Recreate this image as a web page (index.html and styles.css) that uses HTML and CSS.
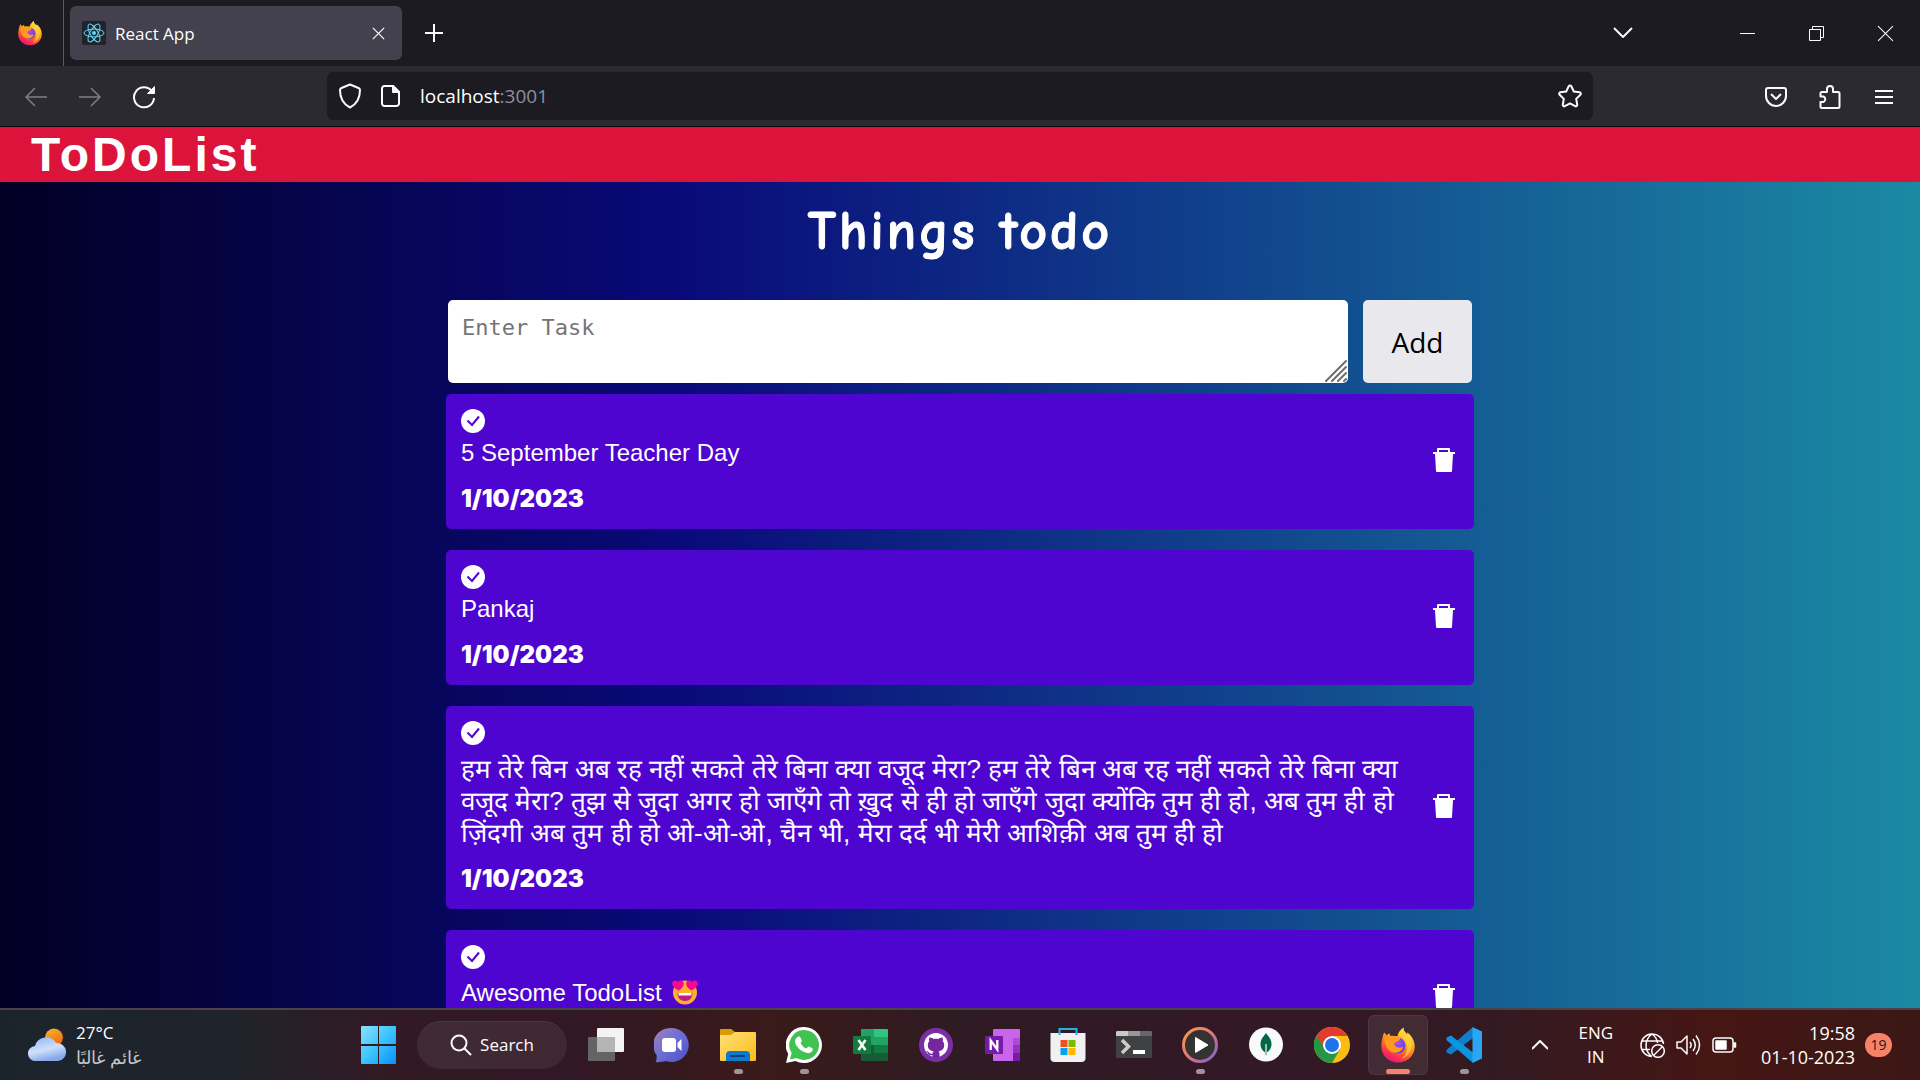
FILE: index.html
```html
<!DOCTYPE html>
<html lang="en">
<head>
<meta charset="utf-8">
<meta name="viewport" content="width=device-width, initial-scale=1">
<title>React App</title>
<link rel="stylesheet" href="styles.css">
</head>
<body>
<svg class="defs" aria-hidden="true">
  <defs>
    <linearGradient id="ffBody" x1=".75" y1="0" x2=".25" y2="1">
      <stop offset="0" stop-color="#fff44f"/><stop offset=".35" stop-color="#ffb01e"/><stop offset=".6" stop-color="#ff6a2b"/><stop offset=".85" stop-color="#f9225c"/><stop offset="1" stop-color="#e21587"/>
    </linearGradient>
    <radialGradient id="ffGlobe" cx=".5" cy=".35" r=".7">
      <stop offset="0" stop-color="#b04bf5"/><stop offset="1" stop-color="#4a43c9"/>
    </radialGradient>
    <symbol id="firefox" viewBox="0 0 34 36">
      <path fill="url(#ffBody)" d="M3 5.500c1.500 1 2.200 2.200 2.500 3.300C6.300 7.500 7.500 6.700 8.700 6.300c-.2 1.500.2 2.600 1.200 3.200 1.600-.6 4-.8 6.400-.2C17 6 19 3 22.500.5c-.3 3 1.500 4.800 3.700 6.800.2-.5.200-1.300 0-2 4.800 4 7.500 8.600 7.500 14.200C33.700 28.500 26.500 35.500 17 35.500S.3 28.300.3 19.500C.3 14 1.700 9.500 3 5.500z"/>
      <circle cx="16.500" cy="18.500" r="8" fill="url(#ffGlobe)"/>
      <path fill="#ff9a1c" d="M3.500 11c4-3 9-2.500 13.500-1.500 2 .5 2.500 2 1.500 3.500-1.300 1.500-3.800 1.600-4.800 3-.8 1.500.4 3.800 3 4.500 2 .5 4-.3 5.800-.5-1.500 4-5 6-8.500 5.800C8 25.500 3 19 3.500 11z"/>
      <path fill="#ffd23a" opacity=".75" d="M22.500.5c-.3 3 1.500 4.800 3.700 6.800 4 4 5.300 8.700 4 14.200-1.500 6-5.700 9-9.700 10.500 5.500-5 7-11 4.500-16.500C23.300 12 18.500 9 22.500.5z"/>
    </symbol>
    <symbol id="check" viewBox="0 0 24 24">
      <circle cx="12" cy="12" r="12" fill="#fff"/>
      <path d="M6.500 11.500l4.500 4.500 7-8.500" fill="none" stroke="#4d05cf" stroke-width="2"/>
    </symbol>
    <symbol id="trash" viewBox="0 0 24 24">
      <path fill="#fff" fill-rule="evenodd" d="M6 0h11a1 1 0 0 1 1 1v3h5v2h-2l-1 17a1 1 0 0 1-1 1H5a1 1 0 0 1-1-1L3 6H1V4h4V1a1 1 0 0 1 1-1zm1 2v2h9V2z"/>
    </symbol>
    <symbol id="close" viewBox="0 0 16 16"><path d="M1 1l14 14M15 1L1 15"/></symbol>
  </defs>
</svg>

<header class="browser">
  <div class="tabstrip">
    <button class="firefox-view" aria-label="Firefox View"><svg width="24" height="28"><use href="#firefox"/></svg></button>
    <div class="tab">
      <svg width="24" height="24" viewBox="0 0 24 24"><rect width="24" height="24" rx="2" fill="#20232a"/><g fill="none" stroke="#61dafb" stroke-width="1"><ellipse cx="12" cy="12" rx="10" ry="3.900"/><ellipse cx="12" cy="12" rx="10" ry="3.900" transform="rotate(60 12 12)"/><ellipse cx="12" cy="12" rx="10" ry="3.900" transform="rotate(120 12 12)"/></g><circle cx="12" cy="12" r="2" fill="#61dafb"/></svg>
      <span class="tab-title">React App</span>
      <button class="icon-btn tab-close" aria-label="Close tab"><svg class="line" width="13" height="13"><use href="#close"/></svg></button>
    </div>
    <button class="icon-btn new-tab" aria-label="New tab"><svg class="line bold" width="20" height="20" viewBox="0 0 20 20"><path d="M10 1v18M1 10h18"/></svg></button>
    <div class="window-controls">
      <button class="icon-btn list-tabs" aria-label="List all tabs"><svg class="line bold" width="20" height="12" viewBox="0 0 20 12"><path d="M1 1l9 9 9-9"/></svg></button>
      <button class="icon-btn" aria-label="Minimize"><svg class="line thin" width="15" height="15" viewBox="0 0 15 15"><path d="M0 7.500h15"/></svg></button>
      <button class="icon-btn" aria-label="Restore"><svg class="line thin" width="15" height="15" viewBox="0 0 15 15"><path d="M.5 3.500h11v11H.5zM3.500 3.500v-3h11v11h-3"/></svg></button>
      <button class="icon-btn" aria-label="Close"><svg class="line thin" width="17" height="17"><use href="#close"/></svg></button>
    </div>
  </div>
  <div class="toolbar">
    <nav class="nav-buttons" aria-label="History">
      <button class="icon-btn dim" aria-label="Back"><svg class="line" width="22" height="20" viewBox="0 0 22 20"><path d="M10 1l-9 9 9 9M1 10h21"/></svg></button>
      <button class="icon-btn dim" aria-label="Forward"><svg class="line" width="22" height="20" viewBox="0 0 22 20"><path d="M12 1l9 9-9 9M21 10H0"/></svg></button>
      <button class="icon-btn" aria-label="Reload"><svg class="line bold" width="24" height="24" viewBox="0 0 24 24"><path d="M20.500 7A10 10 0 1 0 22 13"/><path d="M22.500 1.500v7h-7z" fill="#fbfbfe" stroke-width="1"/></svg></button>
    </nav>
    <div class="urlbar">
      <svg class="line bold" width="24" height="26" viewBox="0 0 24 26"><path d="M12 1.500l8.500 3.500c1 .5 1.500 1 1.500 2C22 15 19 21 12 24.500 5 21 2 15 2 7c0-1 .5-1.500 1.500-2z"/></svg>
      <svg class="line bold" width="20" height="22" viewBox="0 0 20 22"><path d="M3.500 1H12l6 6v11.500a2.500 2.500 0 0 1-2.500 2.500h-12A2.500 2.500 0 0 1 1 18.500v-15A2.500 2.500 0 0 1 3.500 1z"/><path d="M12 1v6h6z" fill="#fbfbfe"/></svg>
      <span class="url">localhost<span class="port">:3001</span></span>
      <button class="icon-btn" aria-label="Bookmark"><svg class="line bold" width="24" height="24" viewBox="0 0 24 24"><path d="M10.700 2.200a1.500 1.500 0 0 1 2.600 0l2.500 5.300 5.800.8a1.400 1.400 0 0 1 .8 2.400L18.200 14.900l1 5.800a1.400 1.400 0 0 1-2 1.500L12 19.400l-5.200 2.800a1.400 1.400 0 0 1-2-1.500l1-5.800L1.600 10.700a1.400 1.400 0 0 1 .8-2.400l5.800-.8z"/></svg></button>
    </div>
    <div class="tools">
      <button class="icon-btn" aria-label="Pocket"><svg class="line bold" width="22" height="20" viewBox="0 0 22 20"><path d="M3 1h16a2 2 0 0 1 2 2v6a10 10 0 0 1-20 0V3a2 2 0 0 1 2-2z"/><path d="M6 7l5 5 5-5"/></svg></button>
      <button class="icon-btn" aria-label="Extensions"><svg class="line bold" width="22" height="24" viewBox="0 0 22 24"><path d="M8 7V4a3 3 0 0 1 6 0v3h5a1.500 1.500 0 0 1 1.500 1.500V21.500A1.500 1.500 0 0 1 19 23H3a1.500 1.500 0 0 1-1.500-1.500V17h3a3 3 0 0 0 0-5.500h-3v-3A1.500 1.500 0 0 1 3 7z"/></svg></button>
      <button class="icon-btn" aria-label="Menu"><svg class="line bold" width="18" height="16" viewBox="0 0 18 16"><path d="M0 2h18M0 8h18M0 14h18"/></svg></button>
    </div>
  </div>
</header>

<main class="app">
  <div class="app-bar">ToDoList</div>
  <section class="board">
    <h1>Things todo</h1>
    <form class="new-task" onsubmit="return false">
      <div class="field">
        <textarea placeholder="Enter Task" aria-label="Enter Task"></textarea>
        <svg class="grip" width="22" height="22" viewBox="0 0 22 22" aria-hidden="true"><path d="M1 21L21 1M7 21L21 7M13 21l8-8M19 21l2-2"/></svg>
      </div>
      <button type="submit">Add</button>
    </form>
    <ul class="tasks">
      <li class="task">
        <div class="task-body"><svg class="tick" width="24" height="24"><use href="#check"/></svg><p>5 September Teacher Day</p><time datetime="2023-10-01">1/10/2023</time></div>
        <button class="delete" aria-label="Delete"><svg width="24" height="24"><use href="#trash"/></svg></button>
      </li>
      <li class="task">
        <div class="task-body"><svg class="tick" width="24" height="24"><use href="#check"/></svg><p>Pankaj</p><time datetime="2023-10-01">1/10/2023</time></div>
        <button class="delete" aria-label="Delete"><svg width="24" height="24"><use href="#trash"/></svg></button>
      </li>
      <li class="task">
        <div class="task-body"><svg class="tick" width="24" height="24"><use href="#check"/></svg><p class="tall" lang="hi">हम तेरे बिन अब रह नहीं सकते तेरे बिना क्या वजूद मेरा? हम तेरे बिन अब रह नहीं सकते तेरे बिना क्या वजूद मेरा? तुझ से जुदा अगर हो जाएँगे तो ख़ुद से ही हो जाएँगे जुदा क्योंकि तुम ही हो, अब तुम ही हो ज़िंदगी अब तुम ही हो ओ-ओ-ओ, चैन भी, मेरा दर्द भी मेरी आशिक़ी अब तुम ही हो</p><time datetime="2023-10-01">1/10/2023</time></div>
        <button class="delete" aria-label="Delete"><svg width="24" height="24"><use href="#trash"/></svg></button>
      </li>
      <li class="task">
        <div class="task-body"><svg class="tick" width="24" height="24"><use href="#check"/></svg><p class="tall">Awesome TodoList <svg class="emoji" role="img" aria-label="Smiling face with heart-eyes" width="26" height="26" viewBox="0 0 26 26"><circle cx="13" cy="13.500" r="12" fill="#ffb02e"/><path d="M5.500 14h15c0 5-3 8-7.500 8s-7.500-3-7.500-8z" fill="#bb1d80"/><path d="M6.500 14h13v2.500h-13z" fill="#fff"/><path d="M6.500 11.500C2 9.500 0 7 .3 4.300.6 1.500 4 .5 6 3c2-2.500 5.500-1.700 5.800 1 .3 2.800-1.600 5.500-5.300 7.500zM19.500 11.500c4.500-2 6.500-4.500 6.200-7.200C25.400 1.500 22 .5 20 3c-2-2.500-5.500-1.700-5.800 1-.3 2.800 1.600 5.500 5.300 7.500z" fill="#f70a8d"/></svg></p></div>
        <button class="delete" aria-label="Delete"><svg width="24" height="24"><use href="#trash"/></svg></button>
      </li>
    </ul>
  </section>
</main>

<footer class="taskbar">
  <div class="weather">
    <svg width="38" height="34" viewBox="0 0 38 34"><defs><linearGradient id="sun" x1="0" y1="0" x2=".5" y2="1"><stop offset="0" stop-color="#f6b92c"/><stop offset="1" stop-color="#ef6c14"/></linearGradient><linearGradient id="cloud" x1="0" y1="0" x2=".4" y2="1"><stop offset="0" stop-color="#8fb2f3"/><stop offset=".6" stop-color="#cfe0fb"/><stop offset="1" stop-color="#86a9ea"/></linearGradient></defs><circle cx="26" cy="9.500" r="9" fill="url(#sun)"/><path d="M8 33a7.500 7.500 0 0 1-1-15A11.500 11.500 0 0 1 28 15a9 9 0 0 1 2 18z" fill="url(#cloud)"/></svg>
    <div><div>27°C</div><div class="muted" lang="ar">غائم غالبًا</div></div>
  </div>
  <div class="apps">
    <button class="app-btn" aria-label="Start"><svg width="35" height="38" viewBox="0 0 35 38"><defs><linearGradient id="win" x1="0" y1="0" x2="1" y2="1"><stop offset="0" stop-color="#8be0ff"/><stop offset=".5" stop-color="#3cc4fc"/><stop offset="1" stop-color="#0a8ffb"/></linearGradient></defs><path fill="url(#win)" d="M1 0h16v18H0V1a1 1 0 0 1 1-1zM18 0h16a1 1 0 0 1 1 1v17H18zM0 20h17v18H1a1 1 0 0 1-1-1zM18 20h17v17a1 1 0 0 1-1 1H18z"/></svg></button>
    <button class="search"><svg class="line bold" width="22" height="22" viewBox="0 0 22 22"><circle cx="9" cy="9" r="7.500"/><path d="M14.500 14.500L21 21"/></svg>Search</button>
    <button class="app-btn" aria-label="Task view"><svg width="36" height="36" viewBox="0 0 36 36"><rect y="10" width="27" height="24" rx="1" fill="#646464"/><rect x="9" y="1" width="27" height="24" rx="1" fill="#f3f3f3"/><path d="M9 10h18v15H9z" fill="#b4b4b4"/></svg></button>
    <button class="app-btn" aria-label="Chat"><svg width="36" height="36" viewBox="0 0 36 36"><defs><linearGradient id="chat" x1="0" y1="0" x2="1" y2="1"><stop offset="0" stop-color="#a77fb8"/><stop offset=".5" stop-color="#6a6fd6"/><stop offset="1" stop-color="#4f4dc4"/></linearGradient></defs><path fill="url(#chat)" d="M18 1a17 17 0 1 1-6 33c-3 1-7 1.500-10.500 1 1-2 1.500-4 1-7A17 17 0 0 1 18 1z"/><rect x="8" y="11" width="14" height="14" rx="3" fill="#fff"/><path fill="#fff" d="M23.500 16l4-4v12l-4-4z"/></svg></button>
    <button class="app-btn open" aria-label="File Explorer"><svg width="36" height="36" viewBox="0 0 36 36"><defs><linearGradient id="folder" x1="0" y1="0" x2="1" y2="1"><stop offset="0" stop-color="#ffe07a"/><stop offset="1" stop-color="#fbbd18"/></linearGradient></defs><path fill="#dc9a07" d="M0 3a1 1 0 0 1 1-1h10l4 3h20v10H0z"/><path fill="url(#folder)" d="M0 8h11l4-3h20a1 1 0 0 1 1 1v27a1 1 0 0 1-1 1H1a1 1 0 0 1-1-1z"/><path fill="#0d78cc" d="M6 34v-6a4 4 0 0 1 4-4h16a4 4 0 0 1 4 4v6z"/><path d="M10 29h15" stroke="#07407e" stroke-width="2"/></svg></button>
    <button class="app-btn open" aria-label="WhatsApp"><svg width="36" height="36" viewBox="0 0 36 36"><path fill="#fff" d="M18 0a18 18 0 1 1-8.500 33.900L0 36l2.200-9A18 18 0 0 1 18 0z"/><path fill="#40c351" d="M18 3a15 15 0 1 1-7.500 28L4 32.500 5.600 26A15 15 0 0 1 18 3z"/><path fill="#fff" d="M12.500 9.500c.8-.3 1.500 0 1.800.7l1.500 3.300c.3.700-.8 2-1.300 2.500 1.300 2.700 3.300 4.500 6 5.600.6-.5 1.700-2.200 2.400-2l3.500 1.700c.7.400.3 2.200-.2 3-1 1.400-3.300 2.200-5.300 1.700-5.500-1.300-9.800-5.200-11.600-9.700-.9-2.500.5-5.900 3.200-6.800z"/></svg></button>
    <button class="app-btn" aria-label="Excel"><svg width="36" height="36" viewBox="0 0 36 36"><path fill="#21a366" d="M9 2h13v16H9z"/><path fill="#33c481" d="M22 2h13a1 1 0 0 1 1 1v8H22z"/><path fill="#21a366" d="M22 10h14v8H22z"/><path fill="#107c41" d="M22 18h14v8H22z"/><path fill="#185c37" d="M9 18h13v8h14v7a1 1 0 0 1-1 1H10a1 1 0 0 1-1-1z"/><rect x="1" y="9" width="18" height="18" rx="1" fill="#107c41"/><path d="M6.500 13l7 10M13.500 13l-7 10" stroke="#fff" stroke-width="2.500"/></svg></button>
    <button class="app-btn" aria-label="GitHub Desktop"><svg width="36" height="36" viewBox="0 0 36 36"><circle cx="18" cy="18" r="17" fill="#7b2ea8"/><circle cx="18" cy="18" r="12" fill="#fff"/><path fill="#7427a0" d="M11.500 10.500c1.500-.2 3 .6 4.300 1.500 1.400-.3 3-.3 4.400 0 1.300-.9 2.800-1.700 4.300-1.500.6 1.500.6 2.600.2 3.700 1 1.100 1.500 2.400 1.500 4 0 4-2.500 5.500-5.700 6 .6.600 1 1.300 1 2.500v4h-7V28c-3.500.7-4.200-1.200-5-2.500-.3-.5-1-1-1.600-1.400 2-.6 2.900 1 3.700 1.900.8.800 1.900.8 2.900.4.100-1 .5-1.700 1-2.200-3.200-.5-5.700-2-5.700-6 0-1.600.5-2.900 1.500-4-.4-1.100-.4-2.200.2-3.700z"/></svg></button>
    <button class="app-btn" aria-label="OneNote"><svg width="36" height="36" viewBox="0 0 36 36"><rect x="9" y="2" width="27" height="32" rx="1" fill="#ca64ea"/><path fill="#ae4bd5" d="M29 11h7v7h-7z"/><path fill="#9332bf" d="M29 18h7v8h-7z"/><path fill="#7719aa" d="M29 26h7v7a1 1 0 0 1-1 1h-6z"/><rect x="1" y="9" width="18" height="18" rx="1" fill="#7719aa"/><path d="M6.700 23V13.500l6.600 9V13" fill="none" stroke="#fff" stroke-width="2.300"/></svg></button>
    <button class="app-btn" aria-label="Microsoft Store"><svg width="36" height="36" viewBox="0 0 36 36"><path fill="#f1f1f1" d="M.5 6h35v25a4 4 0 0 1-4 4h-27a4 4 0 0 1-4-4z"/><path d="M9.500 8V2h17v6" fill="none" stroke="#22b2e6" stroke-width="2"/><path fill="#f25022" d="M10.500 13h7v7h-7z"/><path fill="#7fba00" d="M18.500 13h7v7h-7z"/><path fill="#00a4ef" d="M10.500 21h7v7h-7z"/><path fill="#ffb900" d="M18.500 21h7v7h-7z"/></svg></button>
    <button class="app-btn" aria-label="Terminal"><svg width="36" height="36" viewBox="0 0 36 36"><rect y="4" width="36" height="27" rx="1" fill="#404143"/><path fill="#c9c9c9" d="M1 4h11v5H0V5z"/><path fill="#989898" d="M12 4h12v5H12z"/><path fill="#66676a" d="M24 4h11l1 1v4H24z"/><path d="M6 13l6.500 6.500L6 26" fill="none" stroke="#ccc" stroke-width="3.500"/><path fill="#fff" d="M17 23h12v4H17z"/></svg></button>
    <button class="app-btn open" aria-label="Media Player"><svg width="36" height="36" viewBox="0 0 36 36"><defs><linearGradient id="media" x1="0" y1="0" x2="1" y2="1"><stop offset="0" stop-color="#ff9a3c"/><stop offset=".5" stop-color="#e0777f"/><stop offset="1" stop-color="#7a5bd0"/></linearGradient></defs><circle cx="18" cy="18" r="16.500" fill="#333" stroke="url(#media)" stroke-width="3"/><path d="M13.500 10.500L26 18l-12.500 7.500z" fill="#fff" stroke="#fff" stroke-linejoin="round"/></svg></button>
    <button class="app-btn" aria-label="MongoDB Compass"><svg width="36" height="36" viewBox="0 0 36 36"><circle cx="18" cy="17.500" r="17" fill="#f9fbfa"/><path fill="#00684a" d="M18 6c2 3 5.500 6 5.500 11 0 4.500-2.500 7-5 8.800L18 29l-.5-3.200c-2.500-1.800-5-4.300-5-8.800C12.500 12 16 9 18 6z"/><path d="M18 17v11" stroke="#9cbfb2" stroke-width="2"/></svg></button>
    <button class="app-btn" aria-label="Chrome"><svg width="36" height="36" viewBox="0 0 36 36"><circle cx="18" cy="18" r="18" fill="#fbbc14"/><path fill="#e33b2e" d="M2.400 9A18 18 0 0 1 33.600 9H18L8 20z"/><path fill="#259744" d="M2.400 9A18 18 0 0 0 18 36l8-13.500-14 0z"/><circle cx="18" cy="18" r="9" fill="#fff"/><circle cx="18" cy="18" r="7" fill="#1f73e8"/></svg></button>
    <button class="app-btn active" aria-label="Firefox"><svg width="34" height="36"><use href="#firefox"/></svg></button>
    <button class="app-btn open" aria-label="Visual Studio Code"><svg width="36" height="36" viewBox="0 0 36 36"><path fill="#0f7fcb" d="M27 0v11L5 27.500 1.500 26c-1.500-1-1.500-2.500-.5-3.500z"/><path fill="#0a95e0" d="M27 36V25.500L5 8.500 1.500 10C0 11-.2 12.500 1 13.500z"/><path fill="#2aa7f4" d="M26.500 0L36 4.500v27L26.500 36z"/></svg></button>
  </div>
  <div class="tray">
    <button class="icon-btn" aria-label="Show hidden icons"><svg class="line bold" width="16" height="10" viewBox="0 0 16 10"><path d="M0 9l8-8 8 8"/></svg></button>
    <div class="lang">ENG<br>IN</div>
    <div class="status">
      <svg class="line" width="25" height="25" viewBox="0 0 25 25"><path d="M12 23.500A11.300 11.300 0 1 1 23.500 11M12 23.500C4 18 4 7 12 1c3.500 2.500 5.200 6 5.500 9M2 8h21M2 16.500h8"/><circle cx="18" cy="18" r="6.300"/><path d="M13.500 22.500l9-9"/></svg>
      <svg class="line" width="25" height="22" viewBox="0 0 25 22"><path d="M1 8h4l6-6v18l-6-6H1zM14 8c1.500 2 1.500 4 0 6M17 5c3 4 3 8 0 12M20 1.500c4.500 6 4.500 13 0 19"/></svg>
      <svg class="line" width="25" height="16" viewBox="0 0 25 16"><rect x="1" y="1" width="20" height="14" rx="3"/><path d="M4 4h10v8H4z" fill="#fff"/><path d="M22 6h1.500v4H22z" fill="#fff"/></svg>
    </div>
    <div class="clock"><time>19:58<br>01-10-2023</time></div>
    <span class="badge">19</span>
  </div>
</footer>
</body>
</html>
```
FILE: styles.css
```css
* { box-sizing: border-box; }

body {
  margin: 0;
  height: 100vh;
  display: flex;
  flex-direction: column;
  overflow: hidden;
  font-family: "Liberation Sans", sans-serif;
  color: #fff;
}

button {
  border: 0;
  padding: 0;
  background: none;
  color: inherit;
  font: inherit;
}

svg { display: block; flex: none; }
.defs { position: absolute; width: 0; height: 0; }

.line {
  fill: none;
  stroke: #fbfbfe;
  stroke-width: 1.5;
  stroke-linejoin: round;
}
.line.bold { stroke-width: 2; }
.line.thin { stroke-width: 1; stroke-linejoin: miter; }

.icon-btn { display: grid; place-items: center; }

/* Browser window */
.browser {
  font-family: "Open Sans", sans-serif;
  background: #2b2a33;
  border-bottom: 1px solid #0c0c0d;
}

.tabstrip {
  display: flex;
  align-items: center;
  height: 66px;
  background: #1c1b22;
}
.firefox-view {
  display: flex;
  justify-content: center;
  align-items: center;
  width: 64px;
  height: 100%;
  padding-right: 4px;
  border-right: 1px solid #5b5b66;
}
.tab {
  display: flex;
  align-items: center;
  gap: 9px;
  width: 332px;
  height: 54px;
  margin-left: 6px;
  padding: 0 12px;
  border-radius: 6px;
  background: #42414d;
  font-size: 17px;
}
.tab-title { flex: 1; }
.tab-close { width: 24px; height: 24px; }
.new-tab { width: 64px; height: 54px; }
.window-controls { display: flex; margin-left: auto; }
.window-controls .icon-btn { width: 69px; height: 54px; }
.window-controls .list-tabs { margin-right: 56px; }

.toolbar {
  display: flex;
  align-items: center;
  height: 60px;
}
.nav-buttons, .tools {
  display: flex;
  flex: 0 0 327px;
  padding-top: 2px;
}
.nav-buttons { padding-left: 9px; }
.nav-buttons .icon-btn, .tools .icon-btn { width: 54px; height: 54px; }
.tools { justify-content: flex-end; padding-right: 9px; }
.dim { opacity: .4; }
.urlbar {
  display: flex;
  align-items: center;
  flex: 1;
  gap: 19px;
  height: 48px;
  padding: 0 11px;
  border-radius: 6px;
  background: #1c1b22;
  font-size: 19px;
}
.url { flex: 1; }
.port { color: #8f8f9d; }

/* Page */
.app {
  flex: 1;
  min-height: 0;
  overflow: hidden;
  background: linear-gradient(90deg, #020024 0%, #090979 35%, #1b8aa3 100%);
}
.app-bar {
  padding: 0 31px;
  background: #dc143c;
  font-size: 48px;
  font-weight: 700;
  line-height: 55px;
  letter-spacing: 3px;
}
.board {
  width: 1028px;
  max-width: 100%;
  margin: 0 auto;
}
h1 {
  margin: 16px 0 34px;
  font-family: "Comic Sans MS", "Comic Neue", cursive;
  font-size: 54px;
  line-height: 68px;
  letter-spacing: 3px;
  text-align: center;
  -webkit-text-stroke: 1px #fff;
}
.new-task {
  display: flex;
  gap: 15px;
  padding: 0 2px;
}
.field { position: relative; flex: 1; }
textarea {
  display: block;
  width: 100%;
  height: 83px;
  padding: 14px;
  border: 0;
  border-radius: 5px;
  font-family: Consolas, "DejaVu Sans Mono", monospace;
  font-size: 22px;
  line-height: 28px;
  resize: none;
}
textarea::placeholder { color: #757575; }
.grip {
  position: absolute;
  right: 1px;
  bottom: 1px;
  stroke: #6e6e6e;
  stroke-width: 2;
  stroke-linecap: round;
}
.new-task button {
  width: 109px;
  border-radius: 5px;
  background: #e9e9ed;
  color: #000;
  font-family: "Open Sans", sans-serif;
  font-size: 28px;
}
.tasks {
  display: grid;
  gap: 21px;
  margin: 11px 0 0;
  padding: 0;
  list-style: none;
}
.task {
  display: flex;
  align-items: center;
  gap: 24px;
  padding: 15px 18px 14px 15px;
  border-radius: 5px;
  background: #4d05cf;
  font-size: 24px;
  line-height: 32px;
}
.task-body { flex: 1; min-height: 106px; }
.tick { margin-bottom: 4px; }
.task p { margin: 0 0 14px; }
.task .tall { padding-top: 4px; }
.task p:lang(hi) { font-size: 26px; }
.task time {
  display: block;
  font-family: "Arial Black", Inter, sans-serif;
  font-weight: 900;
}
.delete { padding-bottom: 5px; }
.emoji { display: inline-block; margin-left: 4px; vertical-align: -4px; }

/* Taskbar */
.taskbar {
  display: grid;
  grid-template-columns: 345fr auto 423fr;
  align-items: center;
  height: 72px;
  border-top: 2px solid #4b4147;
  background: linear-gradient(90deg, #1c242b 0%, #1f232b 12%, #321a24 20%, #311825 30%, #3a1a1a 40%, #2f1b23 50%, #331826 66%, #331a22 78%, #451614 89%, #3b1815 100%);
  font-family: "Open Sans", sans-serif;
  font-size: 17px;
  line-height: 24px;
}
.weather {
  display: flex;
  align-items: center;
  gap: 10px;
  padding-left: 28px;
}
.muted { color: #c5c5c5; font-size: 18px; }
.apps { display: flex; align-items: center; }
.app-btn {
  position: relative;
  display: grid;
  place-items: center;
  width: 60px;
  height: 60px;
  margin: 0 3px;
  border-radius: 6px;
}
.active { background: #ffffff14; box-shadow: inset 0 0 0 1px #ffffff10; }
.open::after, .active::after {
  content: "";
  position: absolute;
  bottom: 1px;
  width: 9px;
  height: 5px;
  border-radius: 3px;
  background: #a0949a;
}
.active::after { width: 24px; background: #f7826a; }
.search {
  display: flex;
  justify-content: center;
  align-items: center;
  gap: 8px;
  width: 150px;
  height: 48px;
  margin: 0 6px;
  border-radius: 24px;
  background: #ffffff12;
  box-shadow: inset 0 1px #ffffff10;
}
.tray {
  display: flex;
  align-items: center;
  justify-content: flex-end;
  padding-right: 28px;
}
.lang { margin: 0 27px 0 30px; text-align: center; }
.status { display: flex; align-items: center; gap: 11px; }
.clock { margin: 0 10px 0 24px; font-size: 18px; text-align: right; }
.badge {
  width: 27px;
  height: 24px;
  border-radius: 12px;
  background: #f7826a;
  color: #2a1412;
  font-size: 14px;
  text-align: center;
}
```
